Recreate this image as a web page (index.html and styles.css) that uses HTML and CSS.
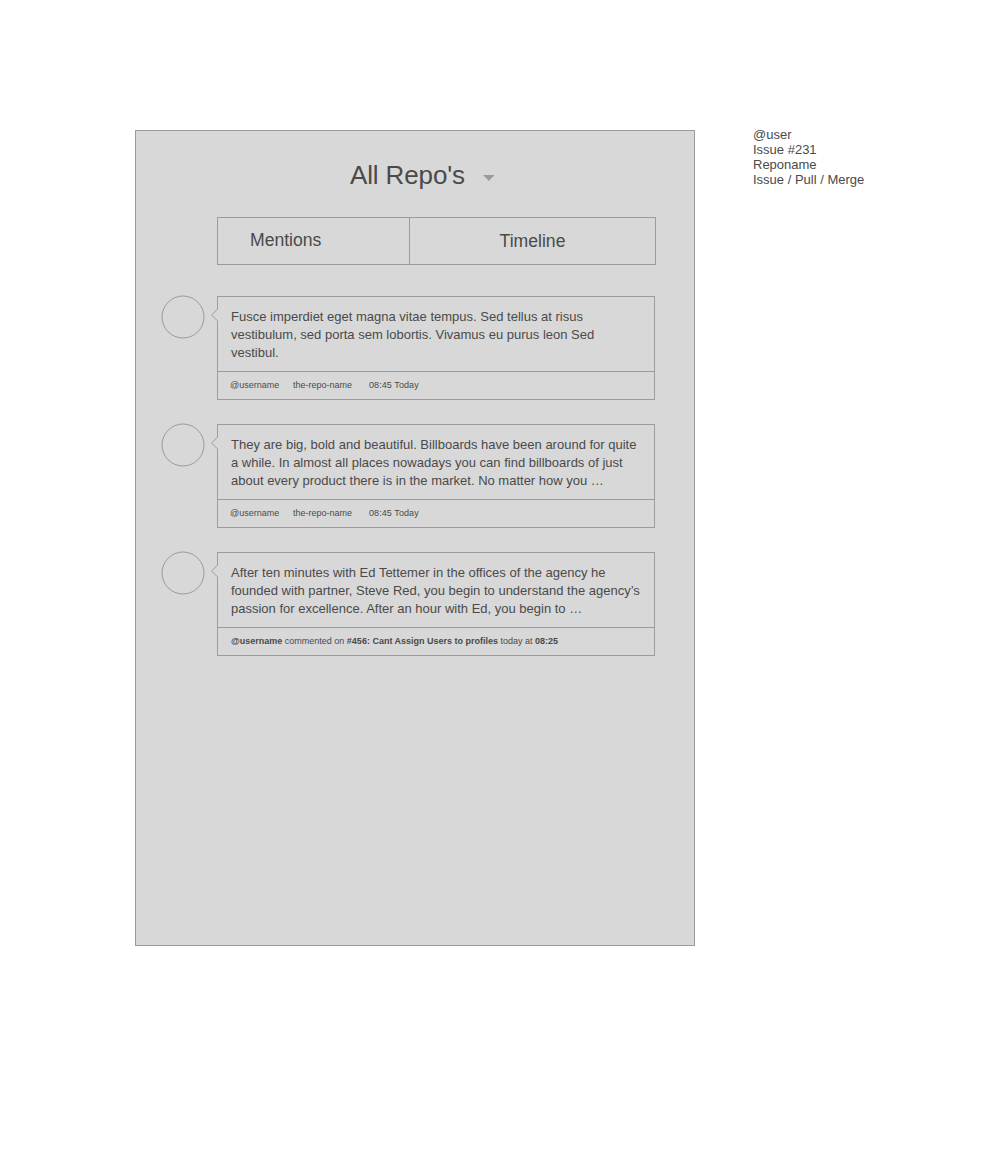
FILE: index.html
```html
<!DOCTYPE html>
<html lang="en">
<head>
<meta charset="utf-8">
<title>All Repo's</title>
<link rel="stylesheet" href="styles.css">
</head>
<body>
<main class="page">
  <section class="panel">
    <header class="header">
      <h1 class="title">All Repo's</h1>
      <svg class="caret" width="12" height="6" viewBox="0 0 12 6"><path d="M0 0H11.6L5.8 6Z" fill="#9b9b9b"/></svg>
    </header>
    <nav class="tabs">
      <a class="tab tab-mentions">Mentions</a>
      <a class="tab tab-timeline">Timeline</a>
    </nav>
    <div class="feed">
      <article class="item">
        <svg class="avatar" width="44" height="44" viewBox="0 0 44 44"><circle cx="22" cy="22" r="21"/></svg>
        <div class="card">
          <svg class="pointer" width="8" height="14" viewBox="0 0 8 14"><path class="pointer-fill" d="M7 1H8V13H7Z"/><path class="pointer-line" d="M7.5 0V1.2L1.5 7L7.5 12.8V14"/></svg>
          <p class="message">Fusce imperdiet eget magna vitae tempus. Sed tellus at risus<br>vestibulum, sed porta sem lobortis. Vivamus eu purus leon Sed<br>vestibul.</p>
          <footer class="meta"><span class="user">@username</span><span class="repo">the-repo-name</span><span class="time">08:45 Today</span></footer>
        </div>
      </article>
      <article class="item">
        <svg class="avatar" width="44" height="44" viewBox="0 0 44 44"><circle cx="22" cy="22" r="21"/></svg>
        <div class="card">
          <svg class="pointer" width="8" height="14" viewBox="0 0 8 14"><path class="pointer-fill" d="M7 1H8V13H7Z"/><path class="pointer-line" d="M7.5 0V1.2L1.5 7L7.5 12.8V14"/></svg>
          <p class="message">They are big, bold and beautiful. Billboards have been around for quite<br>a while. In almost all places nowadays you can find billboards of just<br>about every product there is in the market. No matter how you …</p>
          <footer class="meta"><span class="user">@username</span><span class="repo">the-repo-name</span><span class="time">08:45 Today</span></footer>
        </div>
      </article>
      <article class="item">
        <svg class="avatar" width="44" height="44" viewBox="0 0 44 44"><circle cx="22" cy="22" r="21"/></svg>
        <div class="card">
          <svg class="pointer" width="8" height="14" viewBox="0 0 8 14"><path class="pointer-fill" d="M7 1H8V13H7Z"/><path class="pointer-line" d="M7.5 0V1.2L1.5 7L7.5 12.8V14"/></svg>
          <p class="message">After ten minutes with Ed Tettemer in the offices of the agency he<br>founded with partner, Steve Red, you begin to understand the agency’s<br>passion for excellence. After an hour with Ed, you begin to …</p>
          <footer class="meta meta-sentence"><p class="sentence"><b>@username</b> commented on <b>#456: Cant Assign Users to profiles</b> today at <b>08:25</b></p></footer>
        </div>
      </article>
    </div>
  </section>
  <aside class="notes">@user<br>Issue #231<br>Reponame<br>Issue / Pull / Merge</aside>
</main>
</body>
</html>
```
FILE: styles.css
```css
* { box-sizing: border-box; }
body {
  margin: 0;
  background: #fff;
  color: #4a4a4a;
  font-family: "Liberation Sans", Arial, sans-serif;
}
.page {
  display: flex;
  align-items: flex-start;
  gap: 58px;
  min-height: 1149px;
  padding: 130px 0 0 135px;
}
.panel {
  width: 560px;
  height: 816px;
  flex: none;
  border: 1px solid #9b9b9b;
  background: #d8d8d8;
}
.header {
  display: flex;
  align-items: flex-start;
  height: 86px;
  padding: 29px 0 0 214px;
}
.title {
  width: 133px;
  margin: 0;
  font-size: 26px;
  font-weight: 400;
  letter-spacing: -0.13px;
  line-height: 30px;
  white-space: nowrap;
}
.caret { margin-top: 15px; }
.tabs {
  display: flex;
  width: 439px;
  height: 48px;
  margin-left: 81px;
  border: 1px solid #9b9b9b;
}
.tab {
  font-size: 17.6px;
  line-height: 20px;
}
.tab-mentions {
  width: 192px;
  padding: 12px 0 0 32px;
  border-right: 1px solid #9b9b9b;
}
.tab-timeline { flex: 1; padding: 13px 0 0 89.6px; }
.feed {
  display: flex;
  flex-direction: column;
  gap: 24px;
  padding: 31px 0 0 25px;
}
.item {
  display: flex;
  align-items: flex-start;
  gap: 12px;
}
.avatar { margin-top: -1px; }
.avatar circle { fill: none; stroke: #9b9b9b; }
.card {
  position: relative;
  width: 438px;
  height: 104px;
  border: 1px solid #9b9b9b;
}
/* Speech-bubble notch laid over the card's left border */
.pointer { position: absolute; left: -8px; top: 11px; }
.pointer-fill { fill: #d8d8d8; }
.pointer-line { fill: none; stroke: #9b9b9b; }
.message {
  height: 75px;
  margin: 0;
  padding: 11px 0 0 13px;
  border-bottom: 1px solid #9b9b9b;
  font-size: 13px;
  line-height: 18px;
  white-space: nowrap;
}
.meta {
  display: flex;
  height: 27px;
  padding: 8px 0 0 12px;
  font-size: 9px;
  line-height: 10px;
  white-space: nowrap;
}
.user { width: 63px; }
.repo { width: 76px; }
.time { letter-spacing: 0.08px; }
.meta-sentence { padding-left: 13px; }
.sentence { margin: 0; }
.notes {
  margin-top: -3px;
  font-size: 13px;
  line-height: 15px;
  white-space: nowrap;
}
```
